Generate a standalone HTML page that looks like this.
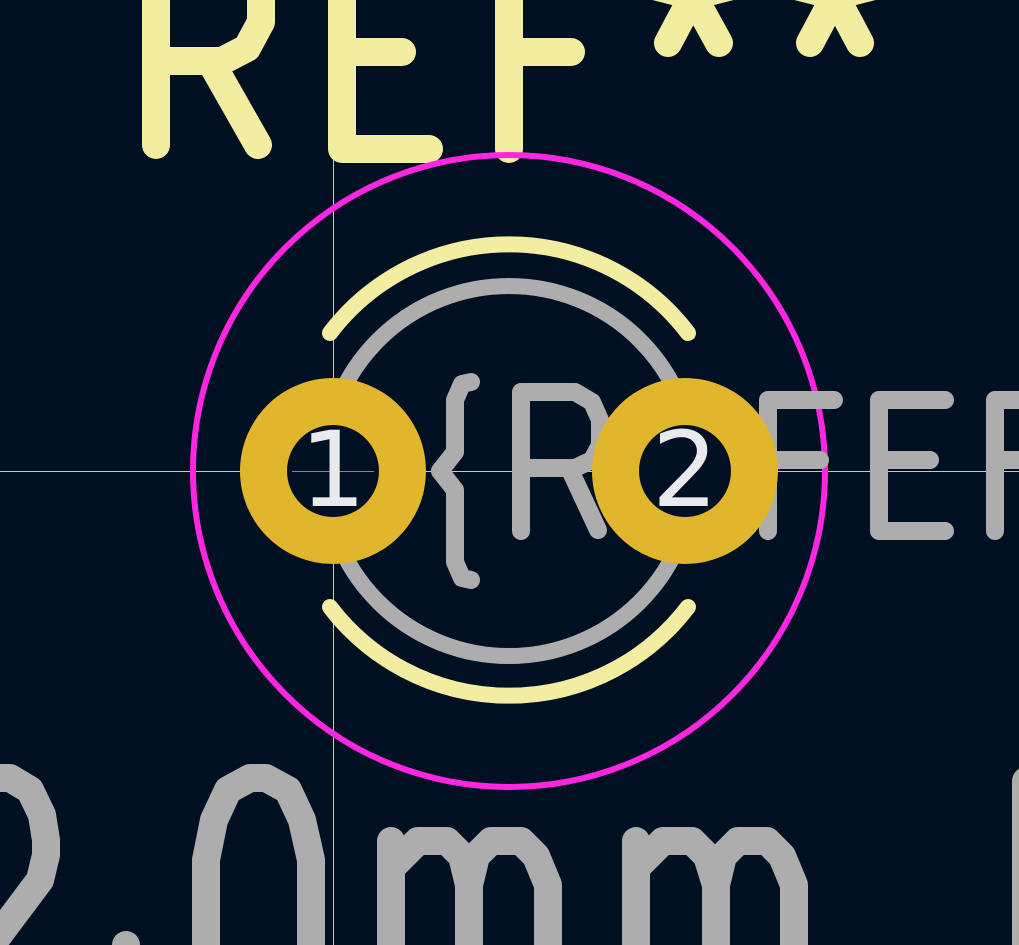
<!DOCTYPE html>
<html><head><style>
html,body{margin:0;padding:0;background:#001023;overflow:hidden;width:1019px;height:945px}
svg{display:block}
</style></head><body>
<svg width="1019" height="945" viewBox="0 0 1019 945" xmlns="http://www.w3.org/2000/svg">
<rect width="1019" height="945" fill="#001023"/>
<line x1="333.5" y1="0" x2="333.5" y2="945" stroke="#c8c8c8" stroke-width="1"/>
<line x1="0" y1="471.5" x2="1019" y2="471.5" stroke="#c8c8c8" stroke-width="1"/>

<g fill="none" stroke="#f2eda1" stroke-width="28" stroke-linecap="round" stroke-linejoin="round">
  <path d="M156,145 V-40"/>
  <path d="M156,61 H222 L247,48 L261,22 V-20"/>
  <path d="M212,64 L258,145"/>
  <path d="M342,-40 V149 H429"/>
  <path d="M342,52 H402"/>
  <path d="M509,-40 V149"/>
  <path d="M509,52 H571"/>
  <path d="M693,-4 L668,43 M693,-4 L719,43 M693,-4 L654,-14 M693,-4 L732,-14 M693,-4 V-40"/>
  <path d="M835,-4 L810,43 M835,-4 L860,43 M835,-4 L796,-14 M835,-4 L874,-14 M835,-4 V-40"/>
</g>

<circle cx="509" cy="471" r="316" fill="none" stroke="#ff26e2" stroke-width="6"/>

<g fill="none" stroke="#adadad" stroke-width="18" stroke-linecap="round" stroke-linejoin="round">
  <circle cx="509" cy="471" r="185" stroke-width="16"/>
  <path d="M471,382 L462,384 L455,400 V452 L440,471 L455,490 V562 L462,578 L471,580"/>
  <path d="M521,531 V392 H575 L592,402 L600,420 V445 L592,460 L575,468 H521"/>
  <path d="M570,470 L598,530"/>
  <path d="M768,531 V400 H834"/>
  <path d="M768,460 H820"/>
  <path d="M879,400 V531 H945 M879,400 H945 M879,460 H930"/>
  <path d="M995,531 V400 H1030 M995,460 H1030"/>
</g>

<g fill="none" stroke="#f2eda1" stroke-width="16" stroke-linecap="round">
  <path d="M330,333 A225,225 0 0 1 688,333"/>
  <path d="M330,607 A225,225 0 0 0 688,607"/>
</g>

<g fill="#e1b62d">
  <circle cx="333" cy="471" r="93"/>
  <circle cx="685" cy="471" r="93"/>
</g>
<g fill="#001023">
  <circle cx="333" cy="471" r="46"/>
  <circle cx="685" cy="471" r="46"/>
</g>
<line x1="292" y1="471.5" x2="374" y2="471.5" stroke="#888" stroke-width="1"/>
<text x="333" y="506" font-family="DejaVu Sans, Liberation Sans, sans-serif" font-size="104" fill="#e8eaec" text-anchor="middle">1</text>
<text x="685" y="506" font-family="DejaVu Sans, Liberation Sans, sans-serif" font-size="104" fill="#e8eaec" text-anchor="middle">2</text>

<g fill="none" stroke="#adadad" stroke-width="28" stroke-linecap="round" stroke-linejoin="round">
  <path d="M-40,790 L-20,778 H10 L30,790 L42,815 L46,840 V855 L40,880 L-20,960"/>
  <path d="M250,778 H266 L288,790 L302,820 L311,860 V960 M250,778 L228,790 L214,820 L206,860 V960"/>
  <path d="M126,945 L126,945"/>
  <path d="M391,1000 V841 M391,868 L418,841 H447 L462,856 L469,885 V1000 M469,885 L476,856 L491,841 H521 L536,856 L548,885 V1000"/>
  <path d="M636,1000 V841 M636,868 L663,841 H692 L707,856 L716,885 V1000 M716,885 L723,856 L738,841 H767 L782,856 L794,885 V1000"/>
  <path d="M1026,781 V1000"/>
</g>
</svg>
</body></html>
